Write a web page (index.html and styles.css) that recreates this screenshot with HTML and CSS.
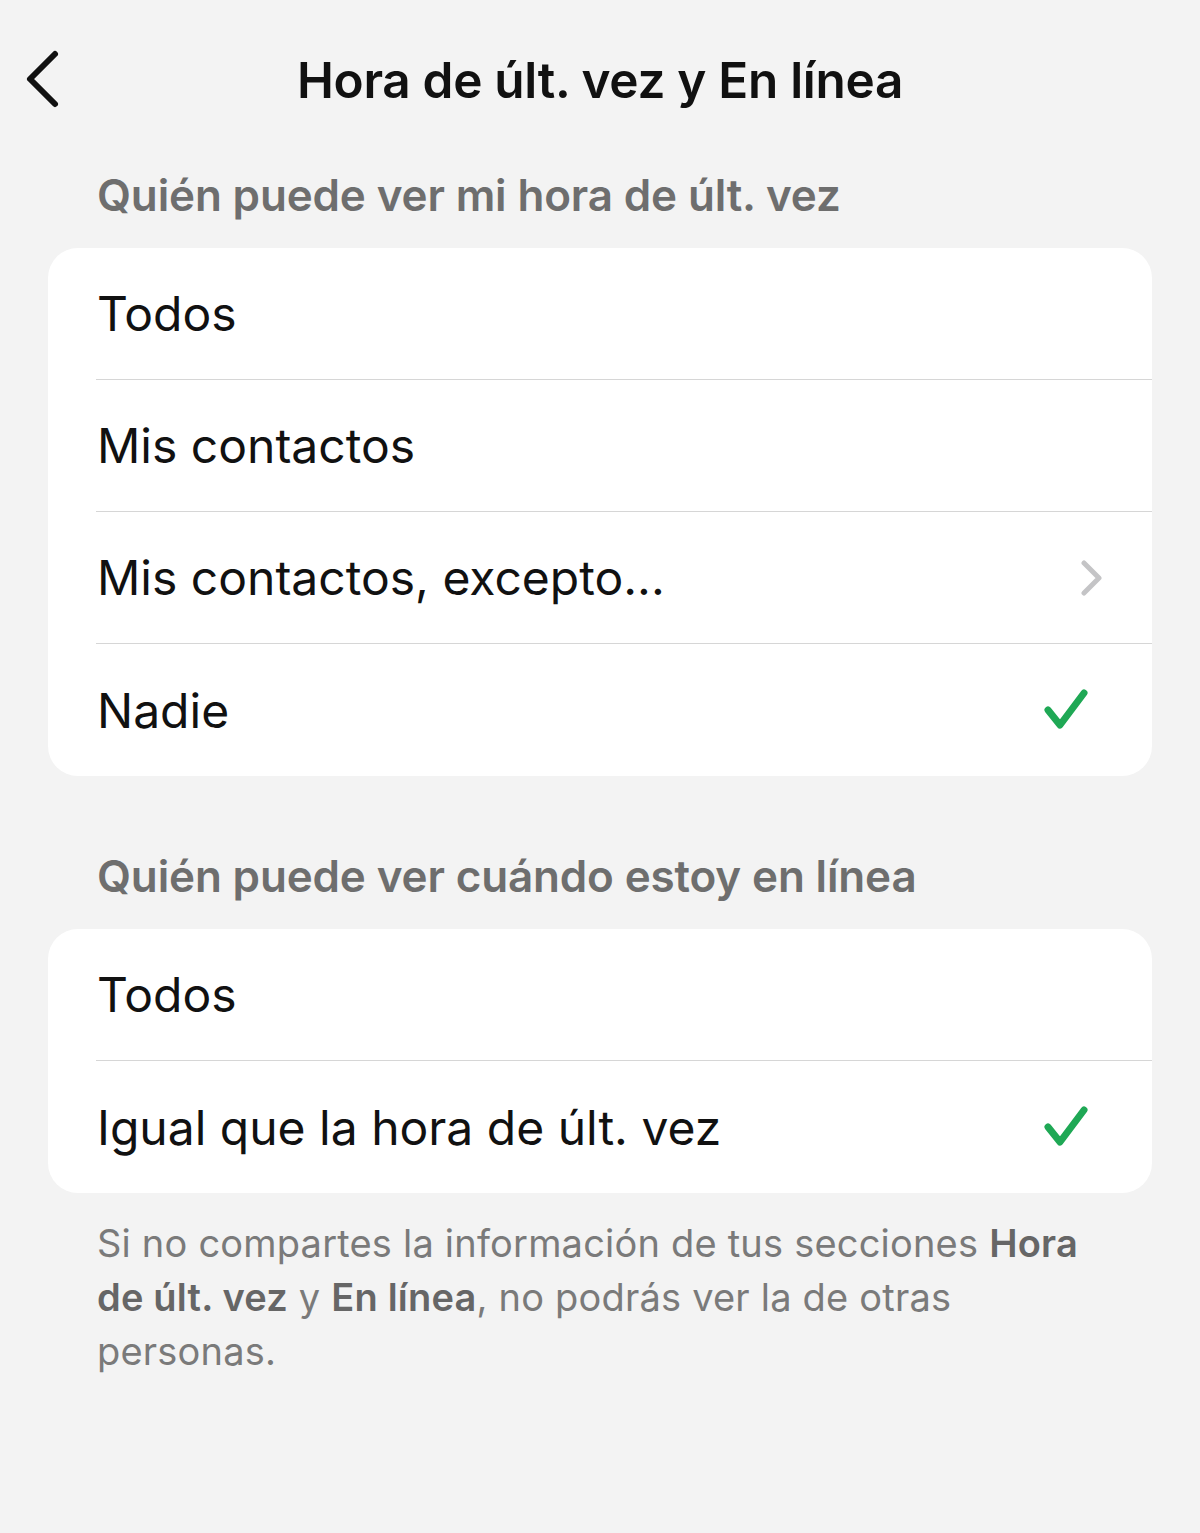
FILE: index.html
```html
<!DOCTYPE html>
<html lang="es">
  <head>
    <meta charset="UTF-8" />
    <meta name="viewport" content="width=device-width, initial-scale=1.0" />
    <title>Hora de últ. vez y En línea</title>
    <link rel="stylesheet" href="styles.css">
  </head>
  <body>
    <header class="nav-bar">
      <button type="button" class="nav-back" aria-label="Atrás">
        <svg width="40" height="60" viewBox="0 0 40 60">
          <path d="M31 5 L6 30 L31 55" fill="none" stroke="#111" stroke-width="6" stroke-linecap="round" stroke-linejoin="round" />
        </svg>
      </button>
      <h1 class="nav-title">Hora de últ. vez y En línea</h1>
    </header>

    <section class="settings-section">
      <h2 class="section-title">Quién puede ver mi hora de últ. vez</h2>
      <ul class="option-list">
        <li class="option-row"><span class="option-label">Todos</span></li>
        <li class="option-row"><span class="option-label">Mis contactos</span></li>
        <li class="option-row">
          <span class="option-label">Mis contactos, excepto...</span>
          <svg class="option-chevron" width="24" height="36" viewBox="0 0 24 36">
            <path d="M4 3 L19 18 L4 33" fill="none" stroke="#c4c4c6" stroke-width="5" stroke-linecap="round" stroke-linejoin="round" />
          </svg>
        </li>
        <li class="option-row">
          <span class="option-label">Nadie</span>
          <svg class="option-check" width="48" height="48" viewBox="0 0 48 48">
            <path d="M5 24 L17 39 L41 7" fill="none" stroke="#1fa855" stroke-width="7" stroke-linecap="round" stroke-linejoin="round" />
          </svg>
        </li>
      </ul>
    </section>

    <section class="settings-section settings-section--second">
      <h2 class="section-title">Quién puede ver cuándo estoy en línea</h2>
      <ul class="option-list">
        <li class="option-row"><span class="option-label">Todos</span></li>
        <li class="option-row">
          <span class="option-label">Igual que la hora de últ. vez</span>
          <svg class="option-check" width="48" height="48" viewBox="0 0 48 48">
            <path d="M5 24 L17 39 L41 7" fill="none" stroke="#1fa855" stroke-width="7" stroke-linecap="round" stroke-linejoin="round" />
          </svg>
        </li>
      </ul>
      <p class="section-footer">
        Si no compartes la información de tus secciones <strong>Hora de últ. vez</strong> y <strong>En línea</strong>, no podrás ver la de otras personas.
      </p>
    </section>
  </body>
</html>
```

FILE: styles.css
```css
/* Page base */
body {
  margin: 0;
  background-color: #f3f3f3;
  font-family: Inter, "Noto Sans", Arial, sans-serif;
  color: #111;
  min-height: 1533px;
}

/* Top navigation bar */
.nav-bar {
  position: relative;
  height: 160px;
  display: flex;
  justify-content: center;
  align-items: center;
}

.nav-back {
  position: absolute;
  left: 24px;
  top: 49px;
  padding: 0;
  border: none;
  background: none;
  cursor: pointer;
}

.nav-back svg {
  display: block;
}

.nav-title {
  margin: 0;
  font-size: 49.5px;
  font-weight: 600;
  letter-spacing: -0.3px;
  color: #111;
}

/* Grouped settings */
.settings-section {
  margin: 0 48px;
}

.settings-section--second {
  margin-top: 65px;
}

.section-title {
  margin: 0 0 18px 49px;
  font-size: 44px;
  line-height: 70px;
  font-weight: 600;
  letter-spacing: -0.15px;
  color: #6e6e6e;
}

.option-list {
  list-style: none;
  margin: 0;
  padding: 0;
  background: #fff;
  border-radius: 30px;
  overflow: hidden;
}

.option-row {
  height: 132px;
  margin-left: 48px;
  padding-left: 1px;
  display: flex;
  align-items: center;
  justify-content: space-between;
  border-bottom: 1.5px solid #d6d6d6;
  box-sizing: border-box;
}

.option-row:last-child {
  border-bottom: none;
}

.option-label {
  font-size: 48px;
  color: #111;
}

.option-chevron {
  margin-right: 48px;
}

.option-check {
  margin-right: 61px;
}

/* Explanatory note under the second group */
.section-footer {
  margin: 23px 52px 0 49px;
  font-size: 38px;
  line-height: 54px;
  letter-spacing: 0.2px;
  color: #7a7a7a;
}

.section-footer strong {
  font-weight: 600;
  color: #666;
}
```
